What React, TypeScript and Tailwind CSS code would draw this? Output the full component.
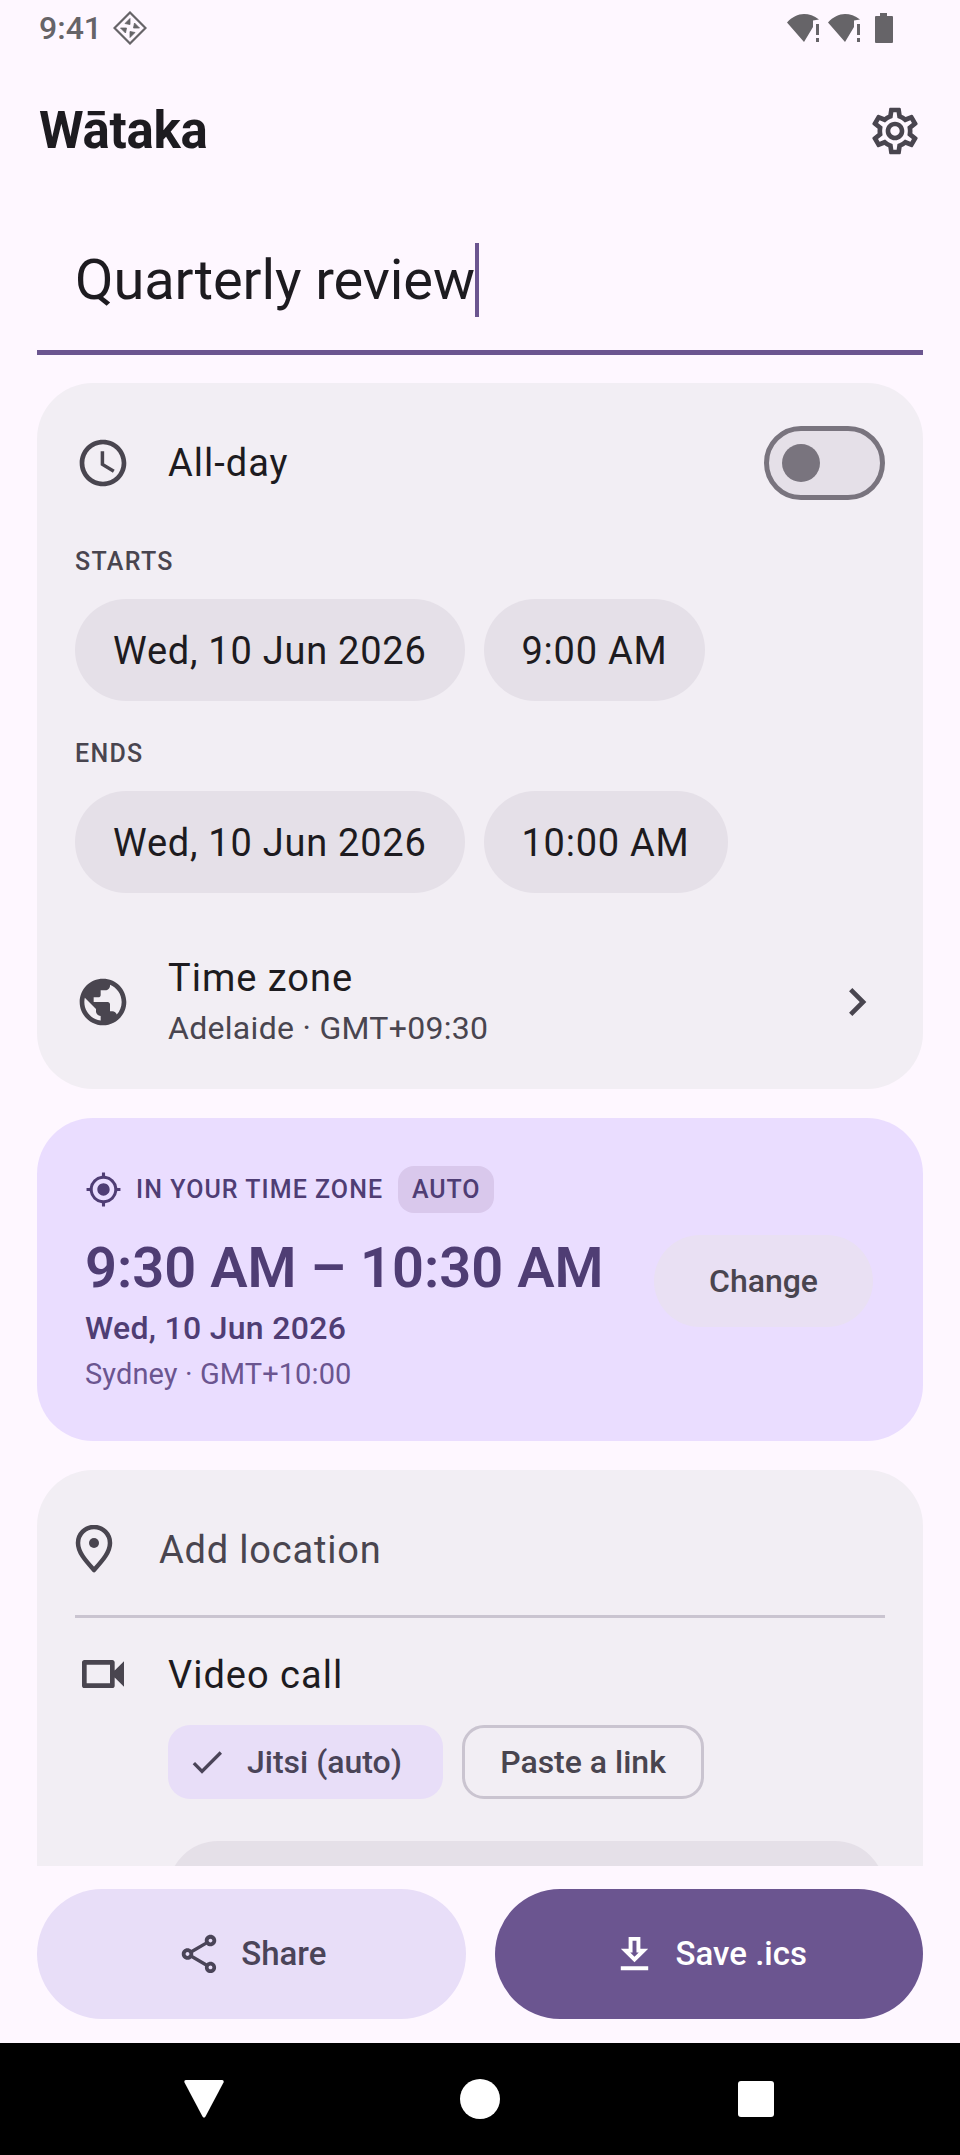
import {
  MdCheck,
  MdChevronRight,
  MdMyLocation,
  MdOutlineSchedule,
  MdOutlineSettings,
  MdOutlineShare,
  MdOutlineVideocam,
  MdPublic,
} from 'react-icons/md';

const WifiAlert = () => (
  <svg width="36" height="30" viewBox="0 0 36 30" className="text-[#666468]">
    <path d="M0 9.500C5 4 11 1 17 1c5 0 10 1.500 15 5.500l-6 1v6.500L17 29z" fill="currentColor" />
    <rect x="29" y="11" width="3" height="11" fill="currentColor" />
    <rect x="29" y="25" width="3" height="4" fill="currentColor" />
  </svg>
);

const Pill = ({ children }: { children: string }) => (
  <div className="flex h-[102px] items-center rounded-full bg-[#E5E0E8] px-[38px] pt-[2px] text-[38px] tracking-[0.750px] text-[#1D1B20]">
    {children}
  </div>
);

const SectionLabel = ({ children }: { children: string }) => (
  <div className="h-[32px] text-[25px] leading-[32px] font-medium tracking-[1.300px] text-[#49454F]">{children}</div>
);

export default function App() {
  return (
    <div className="flex h-[2155px] w-[960px] flex-col overflow-hidden bg-[#FEF7FF] font-['Roboto',sans-serif]">
      {/* Status bar */}
      <div className="flex h-[56px] shrink-0 items-center justify-between pr-[66px] pl-[39px]">
        <div className="flex items-center gap-[11px]">
          <span className="text-[32px] leading-none font-medium text-[#666468]">9:41</span>
          <svg width="34" height="34" viewBox="0 0 34 34" fill="none" stroke="#666468">
            <path d="M17 1.500 32.500 17 17 32.500 1.500 17z" strokeWidth="2.200" />
            <path d="M17 7.500v6l-5-1zM26.500 17h-6l1-5zM17 26.500v-6l5 1zM7.500 17h6l-1 5z" fill="#666468" strokeWidth="0.800" />
          </svg>
        </div>
        <div className="flex items-center gap-[5px]">
          <WifiAlert />
          <WifiAlert />
          <svg width="20" height="30" viewBox="0 0 20 30" className="ml-[5px]">
            <path d="M6 0h7v3h5a1 1 0 0 1 1 1v25a1 1 0 0 1-1 1H2a1 1 0 0 1-1-1V4a1 1 0 0 1 1-1h4z" fill="#666468" />
          </svg>
        </div>
      </div>

      {/* Header */}
      <div className="flex h-[150px] shrink-0 items-start justify-between pt-[46px] pr-[37px] pl-[39px]">
        <h1 className="text-[51px] leading-[58px] font-bold tracking-[-0.300px] text-[#1D1B20]">Wātaka</h1>
        <MdOutlineSettings className="mt-[1px] text-[#49454F]" size={56} />
      </div>

      {/* Title field */}
      <div className="mx-[37px] h-[149px] shrink-0 border-b-[5px] border-[#6B5590] pt-[37px] pl-[38px]">
        <div className="flex h-[74px] items-center">
          <span className="text-[56px] leading-none tracking-[-0.100px] text-[#1D1B20]">Quarterly review</span>
          <span className="h-[74px] w-[4px] bg-[#6B5590]" />
        </div>
      </div>

      {/* Scrolling content */}
      <div className="mt-[28px] flex min-h-0 flex-1 flex-col overflow-hidden px-[37px]">
        <div className="shrink-0 rounded-[56px] bg-[#F2EEF4] px-[38px] pt-[43px] pb-[36px]">
          <div className="flex h-[74px] items-center">
            <MdOutlineSchedule className="text-[#49454F]" size={56} />
            <span className="ml-[37px] flex-1 text-[38px] tracking-[1px] text-[#1D1B20]">All-day</span>
            <div className="flex h-[74px] w-[121px] items-center rounded-full border-[5px] border-[#79747E] bg-[#E5E0E8] pl-[13px]">
              <div className="h-[38px] w-[38px] rounded-full bg-[#79747E]" />
            </div>
          </div>

          <div className="mt-[46px]">
            <SectionLabel>STARTS</SectionLabel>
          </div>
          <div className="mt-[21px] flex gap-[19px]">
            <Pill>Wed, 10 Jun 2026</Pill>
            <Pill>9:00 AM</Pill>
          </div>

          <div className="mt-[37px]">
            <SectionLabel>ENDS</SectionLabel>
          </div>
          <div className="mt-[21px] flex gap-[19px]">
            <Pill>Wed, 10 Jun 2026</Pill>
            <Pill>10:00 AM</Pill>
          </div>

          <div className="mt-[60px] flex items-center">
            <MdPublic className="mt-[-2px] text-[#49454F]" size={56} />
            <div className="ml-[37px] flex-1">
              <div className="text-[38px] leading-[50px] tracking-[1px] text-[#1D1B20]">Time zone</div>
              <div className="text-[32px] leading-[50px] tracking-[0.300px] text-[#49454F]">Adelaide · GMT+09:30</div>
            </div>
            <MdChevronRight className="mt-[-2px] text-[#49454F]" size={56} />
          </div>
        </div>

        <div className="mt-[29px] flex h-[323px] shrink-0 items-start justify-between rounded-[56px] bg-[#EADDFF] pt-[48px] pr-[50px] pl-[48px]">
          <div>
            <div className="flex items-center">
              <MdMyLocation className="text-[#4F3D74]" size={37} />
              <span className="ml-[14px] text-[25px] font-medium tracking-[1.050px] text-[#4F3D74]">IN YOUR TIME ZONE</span>
              <span className="ml-[15px] flex h-[47px] items-center rounded-[16px] bg-[#D9C8EC] px-[14px] text-[25px] font-medium tracking-[0.800px] text-[#4F3D74]">
                AUTO
              </span>
            </div>
            <div className="mt-[22px] text-[56px] leading-[66px] font-semibold text-[#4F3D74]">9:30 AM – 10:30 AM</div>
            <div className="mt-[7px] text-[32px] leading-[40px] font-medium tracking-[0.300px] text-[#4F3D74]">Wed, 10 Jun 2026</div>
            <div className="mt-[7px] text-[29px] leading-[38px] tracking-[0.100px] text-[#6B5590]">Sydney · GMT+10:00</div>
          </div>
          <div className="mt-[69px] flex h-[92px] w-[219px] items-center justify-center rounded-full bg-[#E9E0F3] text-[32px] font-medium text-[#49454F]">
            Change
          </div>
        </div>

        <div className="mt-[29px] shrink-0 rounded-t-[56px] bg-[#F2EEF4] px-[38px] pt-[49px] pb-[40px]">
          <div className="flex h-[60px] items-center">
            <svg width="38" height="48" viewBox="0 0 38 48" fill="none" stroke="#49454F" strokeWidth="4.500">
              <path d="M19 45C10 35 3 27 3 18a16 16 0 0 1 32 0c0 9-7 17-16 27z" strokeLinejoin="round" />
              <circle cx="19" cy="18" r="5" fill="#49454F" stroke="none" />
            </svg>
            <span className="ml-[46px] pt-[3px] text-[38px] tracking-[0.800px] text-[#49454F]">Add location</span>
          </div>
          <div className="mt-[36px] h-[3px] bg-[#CAC4D0]" />
          <div className="mt-[33px] flex h-[46px] items-center">
            <MdOutlineVideocam className="text-[#49454F]" size={56} />
            <span className="ml-[37px] pt-[2px] text-[38px] tracking-[1px] text-[#1D1B20]">Video call</span>
          </div>
          <div className="mt-[28px] ml-[93px] flex gap-[19px]">
            <div className="flex h-[74px] w-[275px] items-center gap-[20px] rounded-[22px] bg-[#E8DEF8] pl-[19px] text-[32px] font-medium text-[#4A4458]">
              <MdCheck size={40} />
              Jitsi (auto)
            </div>
            <div className="flex h-[74px] w-[242px] items-center justify-center rounded-[22px] border-[3px] border-[#CAC4D0] text-[32px] font-medium text-[#49454F]">
              Paste a link
            </div>
          </div>
          <div className="mt-[42px] ml-[93px] h-[120px] rounded-[50px] bg-[#E5E0E8]" />
        </div>
      </div>

      {/* Actions */}
      <div className="flex h-[177px] shrink-0 gap-[29px] px-[37px] pt-[23px]">
        <div className="flex h-[130px] flex-1 items-center justify-center gap-[19px] rounded-full bg-[#E8DEF8] text-[33px] font-medium text-[#4A4458]">
          <MdOutlineShare size={46} />
          Share
        </div>
        <div className="flex h-[130px] flex-1 items-center justify-center gap-[18px] rounded-full bg-[#6B5590] text-[33px] font-medium text-white">
          <svg width="47" height="47" viewBox="0 0 24 24" fill="currentColor">
            <path d="M19 9h-4V3H9v6H5l7 7 7-7zm-8 2V5h2v6h1.170L12 13.170 9.830 11H11zm-6 7h14v2H5z" />
          </svg>
          Save .ics
        </div>
      </div>

      {/* Navigation bar */}
      <div className="flex h-[112px] shrink-0 items-center bg-black">
        <svg width="40" height="38" viewBox="0 0 40 38" className="ml-[184px]">
          <path d="M2 0h36c1.500 0 2 1 1.500 2.500L21.500 36.500c-.8 1.500-2.200 1.500-3 0L.5 2.500C0 1 .5 0 2 0z" fill="#fff" />
        </svg>
        <div className="ml-[236px] h-[40px] w-[40px] rounded-full bg-white" />
        <div className="ml-[238px] h-[36px] w-[36px] rounded-[3px] bg-white" />
      </div>
    </div>
  );
}
